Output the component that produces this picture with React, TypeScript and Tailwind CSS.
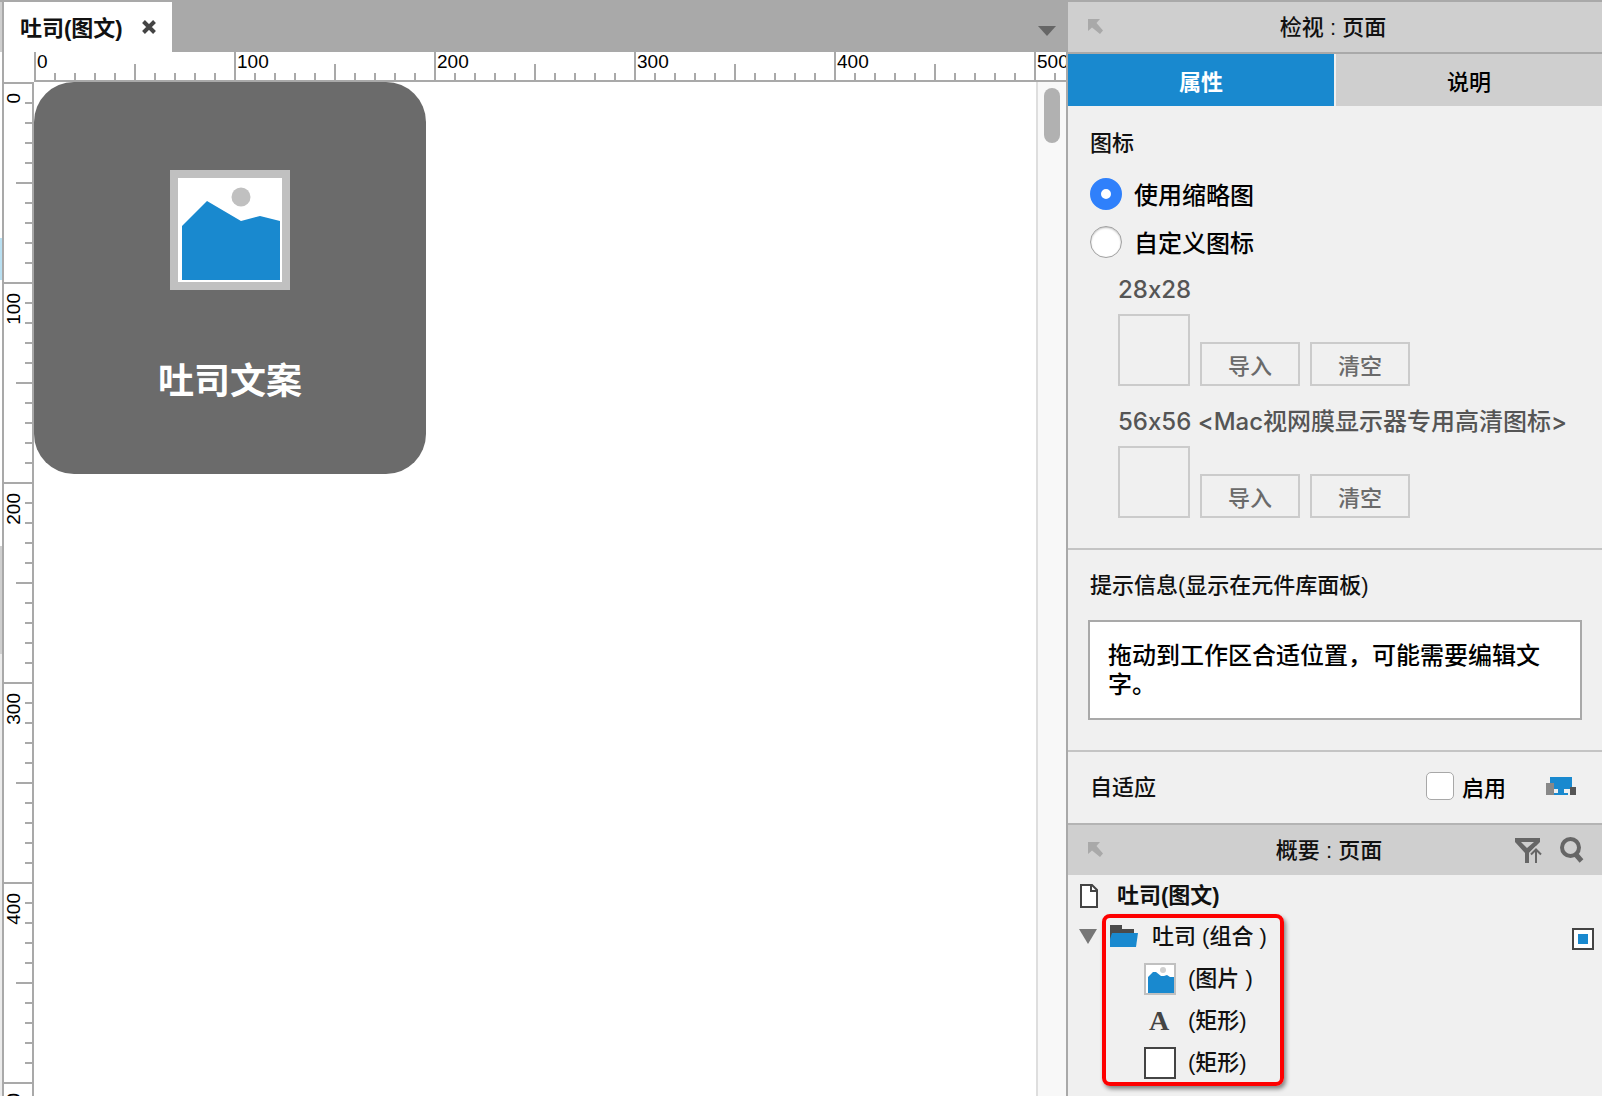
import React from "react";

const MARKS = [0, 100, 200, 300, 400, 500];
const STEPS = [0, 1, 2, 3, 4, 5, 6, 7, 8, 9];

function HorizontalRuler() {
  return (
    <div className="flex h-[30px] shrink-0 overflow-hidden bg-white pl-[30px]">
      <div className="flex min-w-0 flex-1 overflow-hidden border-b-2 border-[#a9a9a9]">
        {MARKS.map((mark) => (
          <div key={mark} className="relative flex w-[200px] shrink-0 items-end">
            {STEPS.map((s) => (
              <span
                key={s}
                className={
                  "w-5 border-l-2 border-[#a9a9a9] " + (s === 0 ? "h-7" : s === 5 ? "h-4" : "h-[7px]")
                }
              />
            ))}
            <span className="absolute left-[3px] top-0 text-[19px] leading-5 text-black">{mark}</span>
          </div>
        ))}
      </div>
    </div>
  );
}

function VerticalRuler() {
  return (
    <div className="flex w-[30px] shrink-0 flex-col overflow-hidden border-r-2 border-[#a9a9a9] bg-white">
      {MARKS.map((mark) => (
        <div key={mark} className="relative flex h-[200px] shrink-0 flex-col items-end">
          {STEPS.map((s) => (
            <span
              key={s}
              className={
                "h-5 border-t-2 border-[#a9a9a9] " + (s === 0 ? "w-7" : s === 5 ? "w-4" : "w-[7px]")
              }
            />
          ))}
          <span className="absolute left-0 top-[11px] rotate-180 text-[19px] leading-5 text-black [writing-mode:vertical-rl]">
            {mark}
          </span>
        </div>
      ))}
    </div>
  );
}

function PictureIcon({ className }: { className: string }) {
  return (
    <svg viewBox="0 0 120 120" className={className} aria-hidden="true">
      <rect width="120" height="120" fill="#c0c0c0" />
      <rect x="8" y="8" width="104" height="104" fill="#fff" />
      <circle cx="71" cy="27" r="9.5" fill="#c0c0c0" />
      <path d="M12 56 37 31 71 51 90 46 110 51V110H12Z" fill="#1989cf" />
    </svg>
  );
}

function SmallPictureIcon() {
  return (
    <svg viewBox="0 0 32 32" className="size-8" aria-hidden="true">
      <rect x="1" y="1" width="30" height="30" fill="#fff" stroke="#c0c0c0" strokeWidth="2" />
      <circle cx="19" cy="7" r="3" fill="#d0d0d0" />
      <path d="M4 14 9 9H12L17 13H20L23 12 26 14H30V30H4Z" fill="#1989cf" />
    </svg>
  );
}

function DockArrow() {
  return (
    <svg viewBox="0 0 16 16" className="size-4 shrink-0" aria-hidden="true">
      <path d="M0 0H12L8.5 4 15 11.5 12 15 4 8.5 0 12Z" fill="#a9a9a9" />
    </svg>
  );
}

function PanelHeader({ title, children }: { title: string; children?: React.ReactNode }) {
  return (
    <header className="flex h-[50px] shrink-0 items-center bg-[#cfcfcf] pl-5 pr-[18px]">
      <div className="flex w-[90px]">
        <DockArrow />
      </div>
      <h2 className="flex-1 pt-0.5 text-center text-[22px] font-medium leading-6">{title}</h2>
      <div className={"flex items-center justify-end gap-[18px] " + (children ? "w-[104px]" : "w-24")}>
        {children}
      </div>
    </header>
  );
}

function Radio({ label, checked }: { label: string; checked?: boolean }) {
  return (
    <label className="flex h-12 items-center gap-3 text-2xl leading-8">
      <input
        type="radio"
        name="icon-source"
        defaultChecked={checked}
        className="size-8 shrink-0 appearance-none rounded-full border border-[#a0a0a0] bg-white shadow-[inset_0_1px_2px_rgba(0,0,0,0.25)] checked:border-[11px] checked:border-[#2f80fb] checked:shadow-none"
      />
      <span className="pt-1">{label}</span>
    </label>
  );
}

function IconSlot({ label }: { label: string }) {
  return (
    <div className="flex flex-col text-[#555]">
      <p className="h-[46px] whitespace-nowrap pt-1.5 text-2xl leading-8 [font-feature-settings:'calt'_0]">
        {label}
      </p>
      <div className="flex items-end gap-2.5">
        <div className="size-[72px] border-2 border-[#cbcbcb]" />
        {["导入", "清空"].map((t) => (
          <button
            key={t}
            type="button"
            className="h-11 w-[100px] border-2 border-[#cbcbcb] pt-1 text-[22px] leading-6 text-[#6a6a6a]"
          >
            {t}
          </button>
        ))}
      </div>
    </div>
  );
}

function TreeChild({ icon, label }: { icon: React.ReactNode; label: string }) {
  return (
    <li className="flex h-[42px] items-center gap-3 pl-[76px]">
      <span className="flex w-8 justify-center">{icon}</span>
      <span>{label}</span>
    </li>
  );
}

export default function App() {
  return (
    <div className="flex h-screen overflow-hidden border-t-2 border-[#a9a9a9] bg-white font-['Liberation_Sans','Noto_Sans_CJK_SC',sans-serif] text-[#111]">
      <div className="flex w-1 shrink-0 flex-col border-r-2 border-[#a9a9a9] bg-[#ececec]">
        <div className="h-[50px] bg-[#cfcfcf]" />
        <div className="h-[186px] bg-white" />
        <div className="h-[42px] bg-[#b9e0f2]" />
        <div className="h-[266px] bg-white" />
        <div className="h-[108px] bg-[#cfcfcf]" />
      </div>

      <main className="flex min-w-0 flex-1 flex-col">
        <div className="flex h-[50px] shrink-0 items-center justify-between bg-[#a9a9a9] pr-2.5">
          <div className="flex h-full w-[168px] items-center justify-between bg-white pl-4 pr-4 pt-1">
            <span className="text-[22px] font-bold leading-6">吐司(图文)</span>
            <button type="button" aria-label="关闭" className="mb-1">
              <svg viewBox="0 0 14 14" className="size-3.5">
                <path d="M1.5 1.5 12.5 12.5M12.5 1.5 1.5 12.5" stroke="#444" strokeWidth="4" />
              </svg>
            </button>
          </div>
          <button type="button" aria-label="标签列表" className="pt-2">
            <svg viewBox="0 0 18 10" className="h-2.5 w-[18px]">
              <path d="M0 0H18L9 10Z" fill="#666" />
            </svg>
          </button>
        </div>
        <HorizontalRuler />
        <div className="flex min-h-0 flex-1">
          <VerticalRuler />
          <div className="min-w-0 flex-1 overflow-hidden bg-white">
            <div className="flex size-[392px] flex-col items-center rounded-[40px] bg-[#6b6b6b] pt-[88px]">
              <PictureIcon className="size-[120px]" />
              <p className="mt-[66px] text-4xl font-bold leading-[52px] text-white">吐司文案</p>
            </div>
          </div>
          <div className="flex w-[30px] shrink-0 justify-center border-l-2 border-[#dedede] bg-[#f8f8f8] pt-1.5">
            <div className="h-[55px] w-4 rounded-full bg-[#b1b1b1]" />
          </div>
        </div>
      </main>

      <aside className="flex w-[536px] shrink-0 flex-col overflow-hidden border-l-2 border-[#a9a9a9] bg-[#f0f0f0] font-medium">
        <PanelHeader title="检视 : 页面" />
        <div role="tablist" className="flex h-[54px] shrink-0 gap-0.5 border-t-2 border-[#a9a9a9] text-[22px]">
          <button role="tab" type="button" aria-selected="true" className="flex-1 bg-[#1989cf] pt-1 font-bold text-white">
            属性
          </button>
          <button role="tab" type="button" aria-selected="false" className="flex-1 bg-[#cfcfcf] pt-1 text-black">
            说明
          </button>
        </div>

        <section className="border-b-2 border-[#c4c4c4] pb-[30px] pl-[22px] pt-6">
          <h3 className="text-[22px] font-medium leading-7">图标</h3>
          <div className="pt-3 text-black">
            <Radio label="使用缩略图" checked />
            <Radio label="自定义图标" />
          </div>
          <div className="flex flex-col gap-[14px] pl-7 pt-0.5 font-['Inter','Noto_Sans_CJK_SC',sans-serif]">
            <IconSlot label="28x28" />
            <IconSlot label="56x56 <Mac视网膜显示器专用高清图标>" />
          </div>
        </section>

        <section className="border-b-2 border-[#c4c4c4] pb-[30px] pl-5 pr-5 pt-[22px]">
          <label htmlFor="tip" className="block pl-0.5 text-[22px] leading-7">
            提示信息(显示在元件库面板)
          </label>
          <textarea
            id="tip"
            defaultValue="拖动到工作区合适位置，可能需要编辑文字。"
            className="mt-5 block h-[100px] w-full resize-none overflow-hidden border-2 border-[#a9a9a9] bg-white px-[18px] pt-[19px] text-2xl leading-[29px] text-black"
          />
        </section>

        <section className="flex h-[71px] shrink-0 items-center pl-[22px] pr-[26px] text-[22px]">
          <h3 className="flex-1 font-medium">自适应</h3>
          <label className="flex items-center gap-2 text-black">
            <input
              type="checkbox"
              className="mb-1 size-7 appearance-none rounded-[5px] border border-[#a8a8a8] bg-white checked:bg-[#2f80fb]"
            />
            <span className="pt-0.5">启用</span>
          </label>
          <button type="button" aria-label="自适应视图" className="mb-1 ml-10">
            <svg viewBox="0 0 30 18" className="h-[18px] w-[30px]">
              <path d="M4 0H26V18H8V6H4Z" fill="#1989cf" />
              <path d="M8 12H12V16H8ZM18 12H24V18H22V16H18Z" fill="#f0f0f0" />
              <path d="M0 6H8V18H0Z" fill="#888" />
              <path d="M24 10H30V18H24Z" fill="#555" />
            </svg>
          </button>
        </section>

        <div className="shrink-0 border-t-2 border-[#b4b4b4]">
          <PanelHeader title="概要 : 页面">
            <button type="button" aria-label="筛选">
              <svg viewBox="0 0 27 25" className="h-[25px] w-[27px]" fill="none" stroke="#666">
                <path d="M0 0H25V4L14 15V25H10V15L0 4ZM6 4 12 10 19 4Z" fill="#666" stroke="none" fillRule="evenodd" />
                <path d="M21 25V12M16 16.5 21 11.5 26 16.5" stroke="#cfcfcf" strokeWidth="5" />
                <path d="M21 25V12M16 16.5 21 11.5 26 16.5" strokeWidth="2" />
              </svg>
            </button>
            <button type="button" aria-label="搜索">
              <svg viewBox="0 0 24 26" className="h-[26px] w-6" fill="none" stroke="#666" strokeWidth="4">
                <circle cx="10.5" cy="10.5" r="8.5" />
                <path d="M15.5 17 21.5 24" strokeWidth="5" />
              </svg>
            </button>
          </PanelHeader>
        </div>

        <div className="relative text-[22px] leading-7">
          <div className="flex h-[41px] items-center gap-[19px] pl-3">
            <svg viewBox="0 0 18 24" className="h-6 w-[18px]" aria-hidden="true">
              <path d="M1 1H12L17 6V23H1Z" fill="#fff" stroke="#444" strokeWidth="2" />
              <path d="M11 1V7H17" fill="none" stroke="#444" strokeWidth="2" />
            </svg>
            <span className="font-bold">吐司(图文)</span>
          </div>
          <ul>
            <li className="flex h-[42px] items-center pl-[11px] pr-2">
              <button type="button" aria-label="折叠" className="pb-0.5">
                <svg viewBox="0 0 18 15" className="h-[15px] w-[18px]">
                  <path d="M0 0H18L9 15Z" fill="#777" />
                </svg>
              </button>
              <svg viewBox="0 0 28 22" className="mb-0.5 ml-[13px] h-[22px] w-7" aria-hidden="true">
                <path d="M0 0H12V4H24V20H0Z" fill="#4a4a4a" />
                <path d="M2 8H28L26 22H0V14Z" fill="#1989cf" />
              </svg>
              <span className="ml-[14px] flex-1">吐司 (组合 )</span>
              <span className="mt-1 flex size-[22px] items-center justify-center border-2 border-[#444] bg-white">
                <span className="size-2.5 bg-[#1989cf]" />
              </span>
            </li>
            <TreeChild icon={<SmallPictureIcon />} label="(图片 )" />
            <TreeChild
              icon={<span className="pr-0.5 font-['Liberation_Serif',serif] text-[28px] font-bold text-[#444]">A</span>}
              label="(矩形)"
            />
            <TreeChild icon={<span className="size-8 border-2 border-[#444] bg-white" />} label="(矩形)" />
          </ul>
          <div className="pointer-events-none absolute left-[34px] top-[39px] h-[172px] w-[182px] rounded-lg border-4 border-[#fe0000] shadow-[2px_3px_4px_rgba(0,0,0,0.45)]" />
        </div>
      </aside>
    </div>
  );
}
